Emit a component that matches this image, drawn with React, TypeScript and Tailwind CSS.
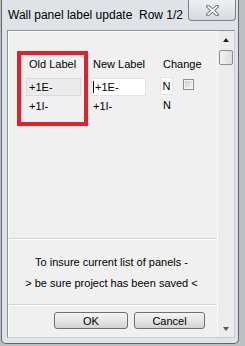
import React from "react";

function CloseGlyph() {
  return (
    <svg width="13" height="11" viewBox="0 0 13 11">
      <path d="M2 1.5 L11 9.5 M11 1.5 L2 9.5" stroke="#5a5f66" strokeWidth="3.6" strokeLinecap="round" />
      <path d="M2 1.5 L11 9.5 M11 1.5 L2 9.5" stroke="#f6f7f8" strokeWidth="1.8" strokeLinecap="round" />
    </svg>
  );
}

function ScrollBar() {
  return (
    <div className="flex w-[17px] flex-col items-center border-l border-[#fafafa] bg-[#ececec]">
      <div className="mt-[7px] h-0 w-0 border-x-[3.5px] border-b-[4px] border-x-transparent border-b-[#222]" />
      <div className="mt-[8px] h-[15px] w-[14px] rounded-[2px] border border-[#8d8d8d] bg-gradient-to-r from-[#f4f4f4] to-[#dcdcdc]" />
      <div className="flex-1" />
      <div className="mb-[6px] h-0 w-0 border-x-[3.5px] border-t-[4px] border-x-transparent border-t-[#555]" />
    </div>
  );
}

export default function App() {
  return (
    <div
      className="h-[346px] w-[245px] overflow-hidden bg-[#bdbfc2] text-black"
      style={{ fontFamily: '"Liberation Sans", Arial, sans-serif' }}
    >
      <div className="ml-[1px] flex h-[344px] w-[238px] flex-col rounded-b-[5px] border-x border-b border-[#62666b] bg-[#dfe2e6] pb-[5px] pl-[5px] pr-[3px]">
        {/* title bar */}
        <div className="flex h-[30px] items-start justify-between">
          <span className="pl-[1px] pt-[8px] text-[12px] leading-[15px]">
            Wall panel label update&nbsp; Row 1/2
          </span>
          <div className="mr-[-1px] flex h-[21px] w-[48px] items-center justify-center rounded-b-[4px] border-x border-b border-[#7c8188] bg-gradient-to-b from-[#eef0f2] to-[#d6dadf]">
            <CloseGlyph />
          </div>
        </div>

        {/* client */}
        <div className="flex flex-1 border border-[#8e9196] border-b-[#c9ccd0] border-r-[#c9ccd0] bg-[#f0f0f0] text-[11px] leading-[14px]">
          <div className="flex flex-1 flex-col border-l border-t border-white">
            <div className="h-[207px] border-b border-[#d4d4d4] pl-[8px] pt-[19px]">
              <div className="flex items-start">
                <div className="flex w-[71px] flex-col border-4 border-[#e4202a] pb-[9px] pl-[5px] pt-[2px]">
                  <span className="pl-[3px]">Old Label</span>
                  <div className="mt-[7px] flex h-[18px] w-[55px] items-center border border-[#dadada] bg-[#ebebeb] pl-[2px]">
                    +1E-
                  </div>
                  <span className="mt-[3px] pl-[3px]">+1I-</span>
                </div>
                <div className="ml-[3px] mt-[6px] flex flex-col">
                  <span className="pl-[2px]">New Label</span>
                  <div className="mt-[7px] flex h-[18px] w-[55px] items-center border border-[#e2e2e2] bg-white pl-[1px]">
                    <span className="mr-[1px] h-[12px] w-[1px] bg-black" />
                    +1E-
                  </div>
                  <span className="mt-[3px] pl-[2px]">+1I-</span>
                </div>
                <div className="ml-[14px] mt-[6px] flex flex-col">
                  <span className="pl-[3px]">Change</span>
                  <div className="mt-[6px] flex items-start">
                    <div className="flex h-[18px] w-[13px] items-center justify-center border border-[#e4e4e4] bg-white">
                      N
                    </div>
                    <div className="ml-[10px] mt-[2px] flex h-[11px] w-[11px] items-center justify-center border border-[#8f8f8f] bg-[#f4f4f4]">
                      <div className="h-[7px] w-[7px] bg-gradient-to-br from-[#cfcfcf] to-[#f3f3f3]" />
                    </div>
                  </div>
                  <span className="mt-[3px] pl-[3px]">N</span>
                </div>
              </div>
            </div>
            <div className="flex h-[66px] flex-col items-center border-b border-[#d4d4d4] border-t border-t-white pr-[3px] pt-[15px]">
              <span>To insure current list of panels -</span>
              <span className="mt-[7px]">&gt; be sure project has been saved &lt;</span>
            </div>
            <div className="flex flex-1 items-start gap-[6px] border-t border-white pl-[45px] pt-[6px]">
              <button className="flex h-[17px] w-[74px] items-center justify-center rounded-[3px] border border-[#707070] bg-gradient-to-b from-[#f3f3f3] via-[#e6e6e6] to-[#d2d2d2]">
                OK
              </button>
              <button className="flex h-[17px] w-[71px] items-center justify-center rounded-[3px] border border-[#707070] bg-gradient-to-b from-[#f3f3f3] via-[#e6e6e6] to-[#d2d2d2]">
                Cancel
              </button>
            </div>
          </div>
          <ScrollBar />
        </div>
      </div>
    </div>
  );
}
